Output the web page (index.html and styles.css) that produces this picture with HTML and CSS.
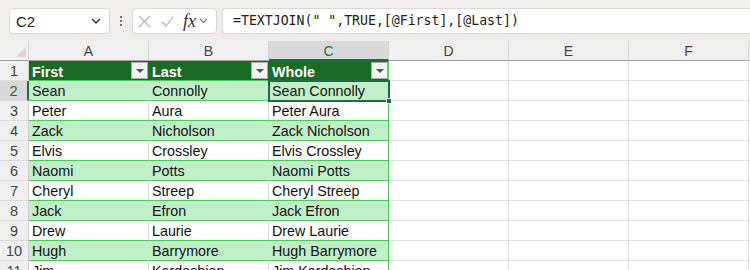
FILE: index.html
```html
<!DOCTYPE html>
<html>
<head>
<meta charset="utf-8">
<link rel="stylesheet" href="styles.css">
</head>
<body>
<div class="topbar">
  <div class="namebox"><span>C2</span>
    <svg class="chev" width="10" height="6" viewBox="0 0 10 6"><path d="M1 1l4 4 4-4" fill="none" stroke="#333" stroke-width="1.3"/></svg>
  </div>
  <div class="dots"><i></i><i></i><i></i></div>
  <div class="fxbox">
    <svg width="13" height="13" viewBox="0 0 13 13"><path d="M1 1l11 11M12 1L1 12" stroke="#b5b5b5" stroke-width="1.2" fill="none"/></svg>
    <svg width="13" height="11" viewBox="0 0 13 11"><path d="M1 6l4 4 7-9" stroke="#b5b5b5" stroke-width="1.2" fill="none"/></svg>
    <span class="fx">fx</span>
    <svg width="9" height="6" viewBox="0 0 9 6"><path d="M1 1l3.5 3.5L8 1" stroke="#777" stroke-width="1.1" fill="none"/></svg>
  </div>
  <div class="formula">=TEXTJOIN(" ",TRUE,[@First],[@Last])</div>
</div>
<div class="sheet">
  <div class="corner"><svg width="10" height="10" viewBox="0 0 10 10"><path d="M10 0V10H0Z" fill="#d6d6d6"/></svg></div>
  <div class="ch">A</div><div class="ch">B</div><div class="ch sel">C</div><div class="ch">D</div><div class="ch">E</div><div class="ch">F</div><div class="ch"></div>

  <div class="rh">1</div>
  <div class="c hd"><span>First</span><b class="flt"></b></div>
  <div class="c hd"><span>Last</span><b class="flt"></b></div>
  <div class="c hd tr"><span>Whole</span><b class="flt"></b></div>
  <div class="c e"></div><div class="c e"></div><div class="c e"></div><div class="c e"></div>

  <div class="rh rsel">2</div>
  <div class="c g">Sean</div><div class="c g">Connolly</div><div class="c g tr act">Sean Connolly<i class="handle"></i></div>
  <div class="c e"></div><div class="c e"></div><div class="c e"></div><div class="c e"></div>

  <div class="rh">3</div>
  <div class="c w">Peter</div><div class="c w">Aura</div><div class="c w tr">Peter Aura</div>
  <div class="c e"></div><div class="c e"></div><div class="c e"></div><div class="c e"></div>

  <div class="rh">4</div>
  <div class="c g">Zack</div><div class="c g">Nicholson</div><div class="c g tr">Zack Nicholson</div>
  <div class="c e"></div><div class="c e"></div><div class="c e"></div><div class="c e"></div>

  <div class="rh">5</div>
  <div class="c w">Elvis</div><div class="c w">Crossley</div><div class="c w tr">Elvis Crossley</div>
  <div class="c e"></div><div class="c e"></div><div class="c e"></div><div class="c e"></div>

  <div class="rh">6</div>
  <div class="c g">Naomi</div><div class="c g">Potts</div><div class="c g tr">Naomi Potts</div>
  <div class="c e"></div><div class="c e"></div><div class="c e"></div><div class="c e"></div>

  <div class="rh">7</div>
  <div class="c w">Cheryl</div><div class="c w">Streep</div><div class="c w tr">Cheryl Streep</div>
  <div class="c e"></div><div class="c e"></div><div class="c e"></div><div class="c e"></div>

  <div class="rh">8</div>
  <div class="c g">Jack</div><div class="c g">Efron</div><div class="c g tr">Jack Efron</div>
  <div class="c e"></div><div class="c e"></div><div class="c e"></div><div class="c e"></div>

  <div class="rh">9</div>
  <div class="c w">Drew</div><div class="c w">Laurie</div><div class="c w tr">Drew Laurie</div>
  <div class="c e"></div><div class="c e"></div><div class="c e"></div><div class="c e"></div>

  <div class="rh">10</div>
  <div class="c g">Hugh</div><div class="c g">Barrymore</div><div class="c g tr">Hugh Barrymore</div>
  <div class="c e"></div><div class="c e"></div><div class="c e"></div><div class="c e"></div>

  <div class="rh">11</div>
  <div class="c w">Jim</div><div class="c w">Kardashian</div><div class="c w tr">Jim Kardashian</div>
  <div class="c e"></div><div class="c e"></div><div class="c e"></div><div class="c e"></div>
</div>
</body>
</html>
```
FILE: styles.css
```css
* { box-sizing: border-box; }
html, body { margin: 0; padding: 0; overflow: hidden; background: #fff; }
body { width: 750px; height: 270px; font-family: "Liberation Sans", Arial, sans-serif; }

.topbar {
  height: 41px;
  background: #f1edec;
  display: flex;
  align-items: flex-start;
  padding: 8px 0 0 9px;
}
.namebox {
  width: 101px; height: 26px;
  background: #fff;
  border: 1px solid #dcdad9;
  border-radius: 4px;
  display: flex; align-items: center; justify-content: space-between;
  padding: 0 8px 0 6px;
  font-size: 15px; color: #222;
}
.dots {
  width: 22px; height: 26px;
  display: flex; flex-direction: column; align-items: center; justify-content: center; gap: 2px;
}
.dots i { display: block; width: 2px; height: 2px; background: #444; border-radius: 1px; }
.fxbox {
  width: 85px; height: 26px;
  background: #fff;
  border: 1px solid #dcdad9;
  border-radius: 4px;
  display: flex; align-items: center;
  padding: 0 0 0 5px;
  gap: 10px;
}
.fxbox .fx {
  font-family: "Liberation Serif", "Times New Roman", serif;
  font-style: italic;
  font-size: 18px;
  color: #333;
  margin-left: -1px;
  margin-right: -7px;
  line-height: 1;
}
.formula {
  flex: 1;
  margin-left: 5px;
  height: 26px;
  background: #fff;
  border: 1px solid #dcdad9;
  border-right: none;
  border-radius: 4px 0 0 4px;
  font-family: "DejaVu Sans Mono", "Liberation Mono", monospace;
  font-size: 13.2px;
  color: #222;
  line-height: 24px;
  padding-left: 10px;
  white-space: pre;
}

.sheet {
  display: grid;
  grid-template-columns: 29px repeat(6, 120px) 1fr;
  grid-auto-rows: 20px;
}
.corner {
  background: #f0f0f0;
  border-right: 1px solid #d6d6d6;
  border-bottom: 1px solid #a0a0a0;
  display: flex; align-items: flex-end; justify-content: flex-end;
  padding: 0 2px 3px 0;
}
.ch {
  background: #f0f0f0;
  border-right: 1px solid #d6d6d6;
  border-bottom: 1px solid #a0a0a0;
  text-align: center;
  font-size: 14px;
  line-height: 19px;
  padding-top: 1px;
  color: #444;
}
.ch.sel {
  background: #d9d9d9;
  color: #1e6c41;
  border-bottom: 2px solid #1e6c41;
}
.rh {
  background: #f0f0f0;
  border-right: 1px solid #cfcfcf;
  border-bottom: 1px solid #dcdcdc;
  text-align: center;
  font-size: 14.5px;
  line-height: 19px;
  padding-top: 1px;
  color: #444;
}
.rh.rsel {
  background: #d9d9d9;
  color: #1e6c41;
  border-right: 2px solid #1e6c41;
}
.c {
  position: relative;
  font-size: 14.3px;
  line-height: 18px;
  padding: 1px 0 0 3px;
  color: #111;
  white-space: nowrap;
  border-right: 1px solid #dadada;
  border-bottom: 1px solid #4fc95e;
}
.c.e { border-bottom-color: #e1e1e1; border-right-color: #e1e1e1; }
.c.g { background: #c1f0c8; border-right-color: #c1f0c8; }
.c.w { background: #fff; }
.c.tr { border-right-color: #4fc95e; }
.c.hd {
  background: #1b6b26;
  border-right-color: #1b6b26;
  color: #fff;
  font-weight: bold;
  display: flex; align-items: center; justify-content: space-between;
  padding-top: 0;
}
.c.hd span { padding-top: 2px; }
.c.hd.tr { border-right-color: #4fc95e; }
.flt {
  width: 17px; height: 17px;
  background: #f2f2f2;
  border: 1px solid #a8a8a8;
  position: relative;
}
.flt::after {
  content: "";
  position: absolute; left: 4px; top: 6px;
  border-left: 4px solid transparent;
  border-right: 4px solid transparent;
  border-top: 4px solid #555;
}
.c.act { outline: 2px solid #1e6c41; outline-offset: -1px; z-index: 2; }
.handle {
  position: absolute; right: -4px; bottom: -4px;
  width: 6px; height: 6px;
  background: #1e6c41;
  border: 1px solid #fff;
}
```
